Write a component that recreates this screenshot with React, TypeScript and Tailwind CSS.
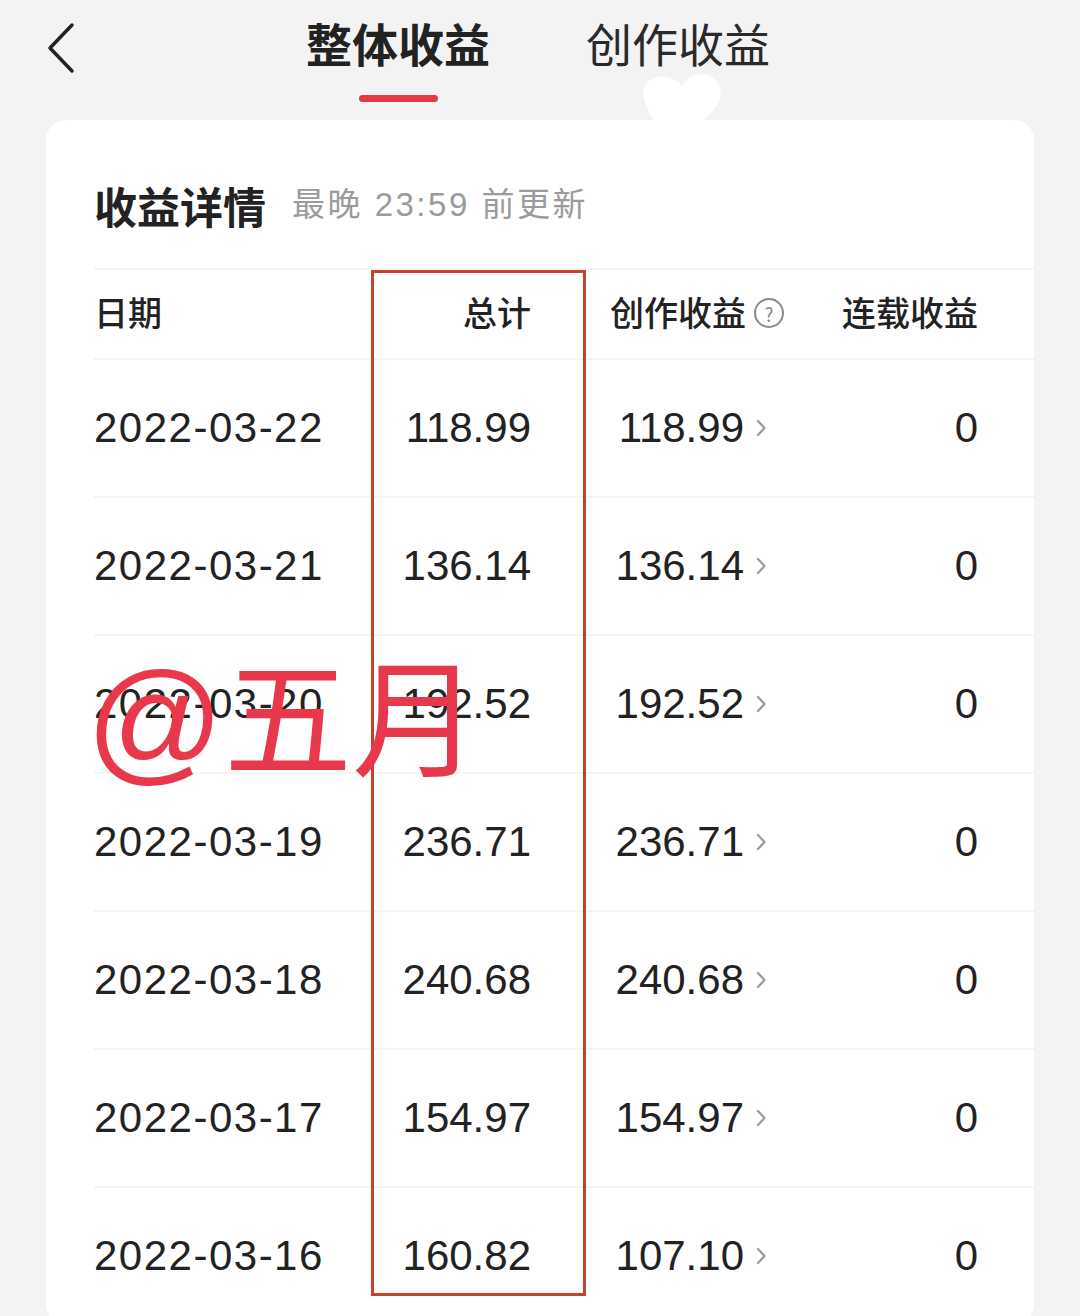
import React from "react";

const rows = [
  { date: "2022-03-22", total: "118.99", create: "118.99", serial: "0" },
  { date: "2022-03-21", total: "136.14", create: "136.14", serial: "0" },
  { date: "2022-03-20", total: "192.52", create: "192.52", serial: "0" },
  { date: "2022-03-19", total: "236.71", create: "236.71", serial: "0" },
  { date: "2022-03-18", total: "240.68", create: "240.68", serial: "0" },
  { date: "2022-03-17", total: "154.97", create: "154.97", serial: "0" },
  { date: "2022-03-16", total: "160.82", create: "107.10", serial: "0" },
];

const font = { fontFamily: '"Liberation Sans", "Noto Sans CJK SC", sans-serif' };

function Chevron() {
  return (
    <svg width="14" height="24" viewBox="0 0 14 24" className="ml-[10px]">
      <path d="M4 5 L10.5 12 L4 19" fill="none" stroke="#9a9a9a" strokeWidth="2.2" strokeLinecap="round" strokeLinejoin="round" />
    </svg>
  );
}

export default function App() {
  return (
    <div className="relative h-[1316px] w-[1080px] overflow-hidden bg-[#f3f3f3] text-[#222]" style={font}>
      {/* top bar */}
      <div className="relative h-[120px]">
        <svg width="40" height="56" viewBox="0 0 40 56" className="absolute left-[40px] top-[20px]">
          <path d="M32 5 L10 28 L32 51" fill="none" stroke="#222" strokeWidth="3.5" strokeLinecap="round" strokeLinejoin="round" />
        </svg>
        <div className="flex items-start pl-[306px] pt-[12px]" style={{ fontFamily: '"Noto Sans CJK SC", sans-serif' }}>
          <div className="flex flex-col items-center">
            <span className="text-[46px] font-bold leading-[60px]">整体收益</span>
            <span className="mt-[23px] h-[7px] w-[79px] rounded-full bg-[#e33a45]" />
          </div>
          <span className="ml-[96px] text-[46px] font-normal leading-[60px] text-[#2a2a2a]">创作收益</span>
        </div>
        {/* white heart-like artifact */}
        <svg width="110" height="56" viewBox="0 0 110 56" className="absolute left-[638px] top-[66px]">
          <path d="M6 32 C0 12 28 2 44 20 C50 6 76 2 82 22 C86 36 72 48 64 56 L18 56 C10 48 8 40 6 32 Z" fill="#ffffff" />
        </svg>
      </div>

      {/* card */}
      <div className="relative mx-[46px] rounded-[20px] bg-white">
        <div className="flex items-center pl-[48px] pt-[58px] pb-[36px]">
          <span className="text-[43px] font-bold leading-[54px]" style={{ fontFamily: '"Noto Sans CJK SC", sans-serif' }}>收益详情</span>
          <span className="ml-[26px] text-[33px] leading-[54px] tracking-[2.5px] text-[#9b9b9b]">
            最晚 23:59 前更新
          </span>
        </div>

        <div className="relative ml-[48px]">
          {/* header */}
          <div className="grid h-[90px] grid-cols-[277px_215px_214px_1fr] items-center border-t-2 border-[#f4f4f4] text-[34px] font-medium" style={{ fontFamily: '"Noto Sans CJK SC", sans-serif' }}>
            <span className="-mt-[6px]">日期</span>
            <span className="-mt-[6px] pr-[55px] text-right">总计</span>
            <span className="-mt-[6px] flex items-center pl-[24px]">
              创作收益
              <span className="ml-[8px] mt-[4px] flex h-[30px] w-[30px] items-center justify-center rounded-full border-2 border-[#8a8a8a] text-[19px] font-normal leading-none text-[#8a8a8a]">?</span>
            </span>
            <span className="-mt-[6px] pr-[56px] text-right">连载收益</span>
          </div>

          {rows.map((r) => (
            <div key={r.date} className="grid h-[138px] grid-cols-[277px_215px_214px_1fr] items-center border-t-2 border-[#f4f4f4] text-[42px] leading-none">
              <span className="tracking-[1.5px]">{r.date}</span>
              <span className="pr-[55px] text-right">{r.total}</span>
              <span className="flex items-center justify-end pr-[32px]">
                {r.create}
                <Chevron />
              </span>
              <span className="pr-[56px] text-right">{r.serial}</span>
            </div>
          ))}

          {/* highlight box */}
          <div className="absolute left-[277px] top-[2px] h-[1026px] w-[215px] border-[3px] border-[#c5432b]" />

          {/* watermark */}
          <div
            className="absolute left-[-8px] top-[384px] text-[136px] font-normal leading-none text-[#e8384b]"
            style={{ fontFamily: '"Liberation Sans", "Noto Sans CJK SC", sans-serif' }}
          >
            @<span className="text-[128px]">五月</span>
          </div>
        </div>
      </div>
    </div>
  );
}
